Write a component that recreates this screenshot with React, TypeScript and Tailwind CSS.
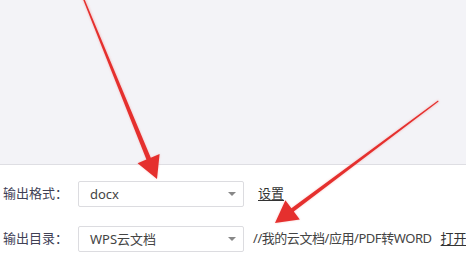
const font = { fontFamily: '"Noto Sans", "Noto Sans CJK SC", sans-serif' };

function SelectBox({ value }: { value: string }) {
  return (
    <div className="shrink-0 w-[166px] h-[26px] border border-[#dcdce0] rounded-[2px] bg-white flex items-center pl-[11px] pr-[7px]">
      <span className="flex-1 text-[13px] text-[#444] leading-none">{value}</span>
      <span className="w-0 h-0 border-l-[4px] border-r-[4px] border-t-[4px] border-l-transparent border-r-transparent border-t-[#888]" />
    </div>
  );
}

export default function App() {
  return (
    <div className="relative w-[466px] h-[266px] overflow-hidden bg-white" style={font}>
      <div className="h-[165px] bg-[#f3f3f7] border-b border-[#dedee3]" />

      <div className="flex flex-col gap-[19px] pt-[16px] pl-[3px]">
        <div className="flex items-center">
          <span className="shrink-0 w-[75px] text-[13px] text-[#404055]">输出格式：</span>
          <SelectBox value="docx" />
          <span className="ml-[14px] text-[13px] text-[#333] underline underline-offset-2">设置</span>
        </div>
        <div className="flex items-center whitespace-nowrap">
          <span className="shrink-0 w-[75px] text-[13px] text-[#404055]">输出目录：</span>
          <SelectBox value="WPS云文档" />
          <span className="shrink-0 ml-[9px] text-[13px] tracking-[-0.45px] text-[#444]">//我的云文档/应用/PDF转WORD</span>
          <span className="shrink-0 ml-[9px] text-[13px] text-[#333] underline underline-offset-2">打开目录</span>
        </div>
      </div>

      {/* red arrows drawn over the screenshot */}
      <svg className="absolute inset-0 pointer-events-none" width="466" height="266" viewBox="0 0 466 266">
        <defs>
          <filter id="glow" x="-20%" y="-20%" width="140%" height="140%">
            <feGaussianBlur stdDeviation="1.2" />
          </filter>
        </defs>
        <g fill="#f08080" opacity="0.4" filter="url(#glow)">
          <polygon points="82,-2 85,-2 150.8,157.8 159.6,154.1 157,179 137.6,163.3 146.4,159.6" />
          <polygon points="438,100 439,102 293.8,211.4 299.8,219.4 275,223 285.4,200.2 291.4,208.2" />
        </g>
        <g fill="#e5302e">
          <polygon points="82.5,-2 84,-2 150.8,157.8 159.6,154.1 157,179 137.6,163.3 146.4,159.6" />
          <polygon points="438,100.5 438.6,101.6 293.8,211.4 299.8,219.4 275,223 285.4,200.2 291.4,208.2" />
        </g>
      </svg>
    </div>
  );
}
